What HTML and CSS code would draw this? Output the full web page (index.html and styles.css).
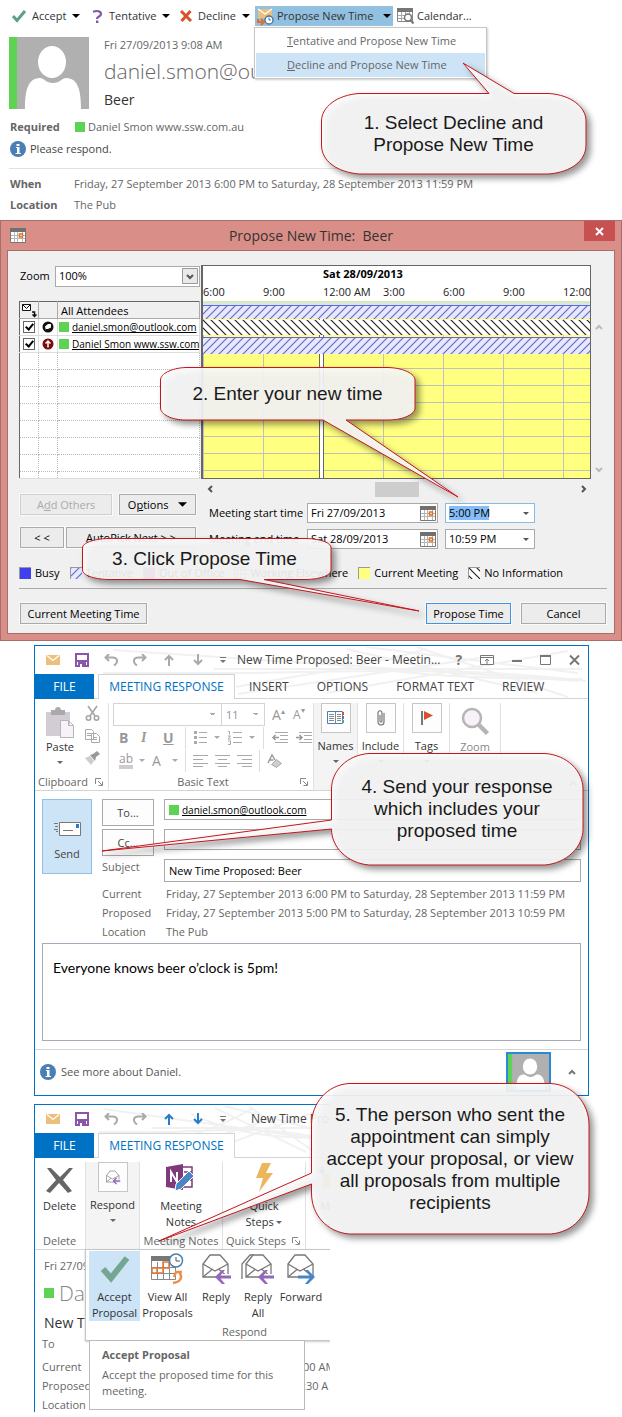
FILE: index.html
```html
<!DOCTYPE html>
<html lang="en">
<head>
<meta charset="utf-8">
<meta name="viewport" content="width=device-width, initial-scale=1">
<title>Propose New Time</title>
<link rel="stylesheet" href="styles.css">
</head>
<body>
<svg class="defs" aria-hidden="true">
  <symbol id="avatar" viewBox="0 0 80 72"><path fill="#b0b0b0" d="M0 0h80v72H0z"/><path fill="#5ed353" d="M0 0h8v72H0z"/><ellipse cx="43" cy="25" rx="14" ry="16" fill="#fff"/><path fill="#fff" d="M16 72c0-16 2-31 15-31 4 0 6 5 13 5s9-5 13-5c13 0 15 15 15 31z"/></symbol>
  <symbol id="info" viewBox="0 0 16 16"><circle cx="8" cy="8" r="8" fill="#4a7fb5"/><path fill="#fff" d="M6.500 3h3v2h-3zM6 6h3.500v6H11v1H5.500v-1H7V7H6z"/></symbol>
  <symbol id="cal" viewBox="0 0 16 15"><path fill="#fff" stroke="#777" d="M.5.5h15v14H.5z"/><path fill="#707070" d="M0 0h16v4H0z"/><path stroke="#b5b5b5" d="M1 7.500h14M1 10.500h14M4.500 4v10M7.500 4v10M12.500 4v10"/><path fill="#fff" stroke="#e07020" stroke-width="1.500" d="M9.500 6h3v3h-3z"/></symbol>
  <symbol id="mail" viewBox="0 0 14 10"><path fill="#ecc07c" d="M0 0h14v10H0z"/><path fill="none" stroke="#fff" stroke-width="1.300" d="M1 .5l6 5 6-5"/></symbol>
  <symbol id="save" viewBox="0 0 14 14"><path fill="#fff" stroke="#8a57a8" stroke-width="2" d="M1 1h12v12H1z"/><path fill="#8a57a8" d="M1 7h12v2H1zM3 9h8v5H3z"/><path fill="#fff" d="M5 11h2v3H5z"/></symbol>
  <symbol id="undo" viewBox="0 0 14 12"><path fill="none" stroke="#aaa" stroke-width="2" d="M5 0L1.500 3.500 5 7M2 3.500h6.500c5.500 0 6 5 1.500 8"/></symbol>
  <symbol id="up" viewBox="0 0 10 12"><path fill="none" stroke="currentColor" stroke-width="2" d="M5 12V1.500M1 6l4-4 4 4"/></symbol>
  <symbol id="down" viewBox="0 0 10 12"><path fill="none" stroke="currentColor" stroke-width="2" d="M5 0v10.500M1 6l4 4 4-4"/></symbol>
  <symbol id="qat" viewBox="0 0 6 6"><path fill="#777" d="M0 0h6v1H0zM0 3h6L3 6z"/></symbol>
  <symbol id="tri" viewBox="0 0 8 4"><path fill="currentColor" d="M0 0h8L4 4z"/></symbol>
  <symbol id="launch" viewBox="0 0 8 8"><path fill="none" stroke="currentColor" d="M.5 6V.5H6M3 3l4 4M7.500 3.500v4h-4"/></symbol>
  <symbol id="env" viewBox="0 0 30 30"><path fill="#fff" stroke="#777" stroke-width="1.300" d="M2 11L9 2h10l8 9v13H2z"/><path fill="none" stroke="#777" stroke-width="1.300" d="M2 11l12 7 13-7M2 24l9-7.500M27 24l-9-7.500"/></symbol>
  <symbol id="larrow" viewBox="0 0 16 14"><path fill="none" stroke="#fff" stroke-width="6" d="M15 7H3"/><path fill="#9467b8" d="M0 7l7-7h3L5.500 5.500H16v3H5.500L10 14H7z"/></symbol>
  <symbol id="swirls" viewBox="0 0 490 52" preserveAspectRatio="none"><g fill="none" stroke="#f1f1f1" stroke-width="2"><path d="M18 3L480 34M8 26h150c110-2 220-6 330 8M118 22h366M140 40C200 28 260 22 330 2M142 47l240-36M270 0l210 26M320 0l150 50M230 46l240-42M250 2l190 44M200 8c90 20 170 24 285 24"/></g></symbol>
</svg>

<main class="page">
  <section class="invite">
    <div class="actions">
      <button class="act"><svg width="14" height="12" viewBox="0 0 14 12"><path fill="none" stroke="#5e9f86" stroke-width="3" d="M1 6l4 4.500L13 1"/></svg>Accept<svg class="tri" width="8" height="4"><use href="#tri"/></svg></button>
      <button class="act"><svg width="11" height="13" viewBox="0 0 11 13"><path fill="none" stroke="#8257a8" stroke-width="2.200" d="M1 1.800C5 .3 9 1 9 4S5 6 5 9"/><path fill="#8257a8" d="M4 10.500h2.400V13H4z"/></svg>Tentative<svg class="tri" width="8" height="4"><use href="#tri"/></svg></button>
      <button class="act"><svg width="12" height="12" viewBox="0 0 12 12"><path fill="none" stroke="#d9512c" stroke-width="3" d="M1 1l10 10M10.500 1L1.500 11"/></svg>Decline<svg class="tri" width="8" height="4"><use href="#tri"/></svg></button>
      <button class="act act-on"><svg width="17" height="17" viewBox="0 0 17 17"><path fill="#ecc07c" d="M1 1h14v9H1z"/><path fill="none" stroke="#fff" stroke-width="1.200" d="M1 1l7 5 7-5"/><path fill="none" stroke="#e07020" stroke-width="2" d="M1 11v3h4M4 11l3 3-3 3"/><circle cx="12" cy="12" r="4" fill="#fff" stroke="#3f6f9f" stroke-width="1.300"/><path fill="none" stroke="#3f6f9f" d="M12 9.500V12h2"/></svg>Propose New Time<svg class="tri" width="8" height="4"><use href="#tri"/></svg></button>
      <button class="act near"><svg width="17" height="16" viewBox="0 0 17 16"><path fill="#fff" stroke="#888" d="M.5.5h15v13H.5z"/><path fill="#777" d="M0 0h16v4H0z"/><path stroke="#aaa" d="M1 7.500h14M1 10.500h14M4.500 4v9M8.500 4v9M12.500 4v9"/><circle cx="11" cy="9.500" r="3.500" fill="#fff" stroke="#777" stroke-width="1.500"/><path stroke="#777" stroke-width="2" d="M13.500 12l3 3.500"/></svg>Calendar...</button>
    </div>
    <div class="menu">
      <button class="menu-item"><u>T</u>entative and Propose New Time</button>
      <button class="menu-item menu-on"><u>D</u>ecline and Propose New Time</button>
    </div>
    <header class="sender">
      <svg width="80" height="72"><use href="#avatar"/></svg>
      <div>
        <p>Fri 27/09/2013 9:08 AM</p>
        <p class="from">daniel.smon@outlook.com</p>
        <h1 class="subject">Beer</h1>
      </div>
    </header>
    <dl class="facts facts-req"><dt>Required</dt><dd><i class="sq"></i>Daniel Smon www.ssw.com.au</dd></dl>
    <p class="notice"><svg width="16" height="16"><use href="#info"/></svg>Please respond.</p>
    <hr class="rule">
    <dl class="facts"><dt>When</dt><dd>Friday, 27 September 2013 6:00 PM to Saturday, 28 September 2013 11:59 PM</dd><dt>Location</dt><dd>The Pub</dd></dl>
  </section>

  <section class="dialog">
    <header class="dialog-bar">
      <svg width="16" height="15"><use href="#cal"/></svg>
      <h2>Propose New Time:&nbsp; Beer</h2>
      <button class="close" aria-label="Close"><svg width="9" height="9" viewBox="0 0 9 9"><path stroke="#fff" stroke-width="2" d="M1 1l7 7M8 1L1 8"/></svg></button>
    </header>
    <div class="dialog-body">
      <div class="planner">
        <div class="people">
          <div class="zoom"><label for="zoom">Zoom</label><span class="zoom-box"><select id="zoom"><option>100%</option></select><svg width="16" height="16" viewBox="0 0 16 16"><path fill="#e9e9e9" stroke="#999" d="M.5.5h15v15H.5z"/><path fill="none" stroke="#555" stroke-width="2" d="M5 7l3 3 3-3"/></svg></span></div>
          <table class="attendees">
            <tr><th><svg width="15" height="15" viewBox="0 0 15 15"><path fill="#fff" stroke="#111" d="M.5 1.500h8v6h-8zM.5 1.500l4 4 4-4"/><path fill="none" stroke="#111" stroke-width="1.500" d="M10 9h2.500v4M10.500 11.500l2 2 2-2"/></svg></th><th></th><th>All Attendees</th></tr>
            <tr><td><input type="checkbox" checked aria-label="Include daniel.smon@outlook.com"></td><td><svg width="12" height="12" viewBox="0 0 12 12"><circle cx="6" cy="6" r="5.500" fill="#111"/><path fill="#fff" d="M3 5.500L6 3h3v3.500L6 8H4v1.500z"/></svg></td><td><div class="who"><i class="sq"></i><u>daniel.smon@outlook.com</u></div></td></tr>
            <tr><td><input type="checkbox" checked aria-label="Include Daniel Smon"></td><td><svg width="12" height="12" viewBox="0 0 12 12"><circle cx="6" cy="6" r="5.500" fill="#7b0a0a"/><path fill="none" stroke="#fff" stroke-width="1.500" d="M6 9.500V3M3.500 5.500L6 3l2.500 2.500"/></svg></td><td><div class="who"><i class="sq"></i><u>Daniel Smon www.ssw.com</u></div></td></tr>
            <tr class="blank"><td></td><td></td><td></td></tr><tr class="blank"><td></td><td></td><td></td></tr><tr class="blank"><td></td><td></td><td></td></tr><tr class="blank"><td></td><td></td><td></td></tr><tr class="blank"><td></td><td></td><td></td></tr><tr class="blank"><td></td><td></td><td></td></tr><tr class="blank"><td></td><td></td><td></td></tr><tr class="tail"><td></td><td></td><td></td></tr>
          </table>
        </div>
        <div class="timeline">
          <div class="days"><b>Sat 28/09/2013</b></div>
          <div class="hours"><span>6:00</span><span>9:00</span><span>12:00 AM</span><span>3:00</span><span>6:00</span><span>9:00</span><span>12:00</span></div>
          <div class="slots">
            <svg class="bar bar-all" width="100%" height="13"><defs><pattern id="tent" width="8" height="8" patternUnits="userSpaceOnUse"><path fill="#e6e9ff" d="M0 0h8v8H0z"/><path stroke="#6868cc" stroke-width="1.200" d="M-1 9L9-1M-1 1l2-2M7 9l2-2"/></pattern><pattern id="noinfo" width="8" height="8" patternUnits="userSpaceOnUse"><path fill="#fff" d="M0 0h8v8H0z"/><path stroke="#222" stroke-width="1.200" d="M-1-1L9 9M7-1l2 2M-1 7l2 2"/></pattern></defs><rect width="100%" height="13" fill="url(#tent)"/></svg>
            <svg class="bar-none" width="100%" height="15"><rect width="100%" height="15" fill="url(#noinfo)"/></svg>
            <svg class="bar" width="100%" height="16"><rect width="100%" height="16" fill="url(#tent)"/></svg>
          </div>
        </div>
        <div class="vscroll"><svg width="8" height="6" viewBox="0 0 8 6"><path fill="none" stroke="#bbb" stroke-width="2" d="M1 5l3-3 3 3"/></svg><svg width="8" height="6" viewBox="0 0 8 6"><path fill="none" stroke="#bbb" stroke-width="2" d="M1 1l3 3 3-3"/></svg></div>
      </div>
      <div class="controls">
        <div class="pick">
          <button class="btn off" disabled><span>A<u>d</u>d Others</span></button><button class="btn"><span>O<u>p</u>tions</span><svg width="9" height="5"><use href="#tri"/></svg></button>
          <button class="btn">&lt; &lt;</button><button class="btn">AutoPick Next &gt; &gt;</button>
        </div>
        <div>
          <div class="hscroll"><svg width="6" height="8" viewBox="0 0 6 8"><path fill="none" stroke="#555" stroke-width="2" d="M5 1L2 4l3 3"/></svg><i></i><svg width="6" height="8" viewBox="0 0 6 8"><path fill="none" stroke="#555" stroke-width="2" d="M1 1l3 3-3 3"/></svg></div>
          <div class="times">
            <label for="sd">Meeting start time</label><span class="date"><input id="sd" value="Fri 27/09/2013"><svg width="16" height="15"><use href="#cal"/></svg></span><span class="time time-on"><select aria-label="Start time"><option>5:00 PM</option></select><svg width="6" height="3"><use href="#tri"/></svg></span>
            <label for="ed">Meeting end time</label><span class="date"><input id="ed" value="Sat 28/09/2013"><svg width="16" height="15"><use href="#cal"/></svg></span><span class="time"><select aria-label="End time"><option>10:59 PM</option></select><svg width="6" height="3"><use href="#tri"/></svg></span>
          </div>
        </div>
      </div>
      <ul class="legend">
        <li><i class="key busy"></i>Busy</li>
        <li><svg class="key" width="12" height="12"><rect width="12" height="12" fill="url(#tent)"/></svg>Tentative</li>
        <li><i class="key oof"></i>Out of Office</li>
        <li><i class="key else"></i>Working Elsewhere</li>
        <li><i class="key now"></i>Current Meeting</li>
        <li><svg class="key" width="12" height="12"><rect width="12" height="12" fill="url(#noinfo)"/></svg>No Information</li>
      </ul>
      <div class="submit"><button class="btn cur">Current Meeting Time</button><button class="btn primary">Propose Time</button><button class="btn">Cancel</button></div>
    </div>
  </section>

  <section class="window compose">
    <svg class="swirls"><use href="#swirls"/></svg>
    <header class="bar-top">
      <svg width="14" height="10"><use href="#mail"/></svg><svg width="14" height="14"><use href="#save"/></svg><svg width="14" height="12"><use href="#undo"/></svg><svg class="flip" width="14" height="12"><use href="#undo"/></svg><svg width="10" height="12"><use href="#up"/></svg><svg width="10" height="12"><use href="#down"/></svg><svg width="6" height="6"><use href="#qat"/></svg>
      <h2>New Time Proposed: Beer - Meetin...</h2>
      <div class="sys"><b>?</b><svg width="14" height="10" viewBox="0 0 14 10"><path fill="#fff" stroke="#777" d="M.5.5h13v9H.5zM.5 2.500h13"/><path fill="none" stroke="#777" d="M7 9V4M5 6l2-2 2 2"/></svg><svg width="10" height="10" viewBox="0 0 10 10"><path fill="#777" d="M0 5h10v2H0z"/></svg><svg width="11" height="10" viewBox="0 0 11 10"><path fill="none" stroke="#777" d="M.5.5h10v9H.5z"/><path fill="#777" d="M0 0h11v2H0z"/></svg><svg width="11" height="10" viewBox="0 0 11 10"><path stroke="#777" stroke-width="2" d="M1 .5l9 9M10 .5l-9 9"/></svg></div>
    </header>
    <nav class="tabs"><a class="file" href="#file">FILE</a><a class="on" href="#response">MEETING RESPONSE</a><a href="#insert">INSERT</a><a href="#options">OPTIONS</a><a href="#format">FORMAT TEXT</a><a href="#review">REVIEW</a></nav>
    <div class="ribbon">
      <div class="group clip">
        <button class="big"><svg width="30" height="32" viewBox="0 0 30 32"><path fill="#d2cdd4" d="M1 5h24v24H1z"/><path fill="#aaa" d="M6 3h4c0-4 6-4 6 0h4v5H6z"/><path fill="#f7f2f8" stroke="#b5b5b5" d="M15.500 13.500h8l5 5v12h-13zM23.500 13.500v5h5"/></svg>Paste<svg class="tri sm" width="6" height="3"><use href="#tri"/></svg></button>
        <div class="stack"><svg width="15" height="15" viewBox="0 0 15 15"><g fill="none" stroke="#a5a5a5" stroke-width="1.600"><path d="M3 0l7 10M12 0L5 10"/><circle cx="3.500" cy="12" r="2.200"/><circle cx="11.500" cy="12" r="2.200"/></g></svg><svg width="15" height="14" viewBox="0 0 15 14"><path fill="#fff" stroke="#aaa" d="M.5.5h6l2 2v8h-8zM6.500 4.500h5l3 3v6h-8zM2 4.500h4M2 6.500h4M8 8.500h4M8 10.500h4"/></svg><svg width="15" height="14" viewBox="0 0 15 14"><path fill="#d0cbd2" d="M0 7l5-2 4 5-3 4z"/><path fill="#999" d="M5 4l3-1 4-3 3 3-4 3-1 4z"/></svg></div>
        <span class="cap">Clipboard</span><svg class="corner" width="8" height="8"><use href="#launch"/></svg>
      </div>
      <div class="group text">
        <div class="tools"><select class="font" aria-label="Font"><option></option></select><select class="size" aria-label="Font size"><option>11</option></select><span class="g">A<sup>▴</sup></span><span class="g small">A<sup>▾</sup></span></div>
        <div class="tools"><b class="g">B</b><i class="g it">I</i><b class="g"><u>U</u></b><span class="vr"></span><svg width="13" height="15" viewBox="0 0 13 15"><path fill="#aaa" d="M0 1h3v3H0zM0 6h3v3H0zM0 11h3v3H0zM5 2h8v1H5zM5 7h8v1H5zM5 12h8v1H5z"/></svg><svg class="tri sm" width="6" height="3"><use href="#tri"/></svg><svg width="14" height="15" viewBox="0 0 14 15"><path fill="none" stroke="#aaa" d="M0 1.500h1.500v3M0 6h2.500L0 9h3M0 11h2.500v3.500H0M5 2.500h9M5 7.500h9M5 12.500h9"/></svg><svg class="tri sm" width="6" height="3"><use href="#tri"/></svg><span class="vr"></span><svg width="16" height="11" viewBox="0 0 16 11"><path fill="none" stroke="#aaa" d="M3 .5h13M8 3.500h8M8 7.500h8M3 10.500h13"/><path fill="none" stroke="#999" stroke-width="1.500" d="M7 5.500H1M3.500 3L1 5.500 3.500 8"/></svg><svg width="16" height="11" viewBox="0 0 16 11"><path fill="none" stroke="#aaa" d="M3 .5h13M8 3.500h8M8 7.500h8M3 10.500h13"/><path fill="none" stroke="#999" stroke-width="1.500" d="M0 5.500h6M3.500 3L6 5.500 3.500 8"/></svg></div>
        <div class="tools row3"><span class="g hl">ab</span><svg class="tri sm" width="6" height="3"><use href="#tri"/></svg><span class="g">A</span><svg class="tri sm" width="6" height="3"><use href="#tri"/></svg><span class="vr"></span><svg width="15" height="12" viewBox="0 0 15 12"><path stroke="#aaa" d="M0 .5h15M0 4.500h10M0 8.500h15M0 11.500h10"/></svg><svg width="15" height="12" viewBox="0 0 15 12"><path stroke="#aaa" d="M0 .5h15M3 4.500h9M0 8.500h15M3 11.500h9"/></svg><svg width="15" height="12" viewBox="0 0 15 12"><path stroke="#aaa" d="M0 .5h15M5 4.500h10M0 8.500h15M5 11.500h10"/></svg><span class="vr"></span><svg width="15" height="14" viewBox="0 0 15 14"><path fill="none" stroke="#999" stroke-width="1.400" d="M1 9l4-8 3 5M2.500 6h4"/><path fill="#d0cbd2" stroke="#aaa" d="M4.500 10.500l5-5 5 4-5 4z"/></svg></div>
        <span class="cap mid">Basic Text</span><svg class="corner" width="8" height="8"><use href="#launch"/></svg>
      </div>
      <div class="group tile shade"><button class="big"><span class="ico"><svg width="18" height="14" viewBox="0 0 18 14"><path fill="#fff" stroke="#4a7fb5" d="M.5.5h15v12H.5z"/><path stroke="#888" d="M8.500 1v12M2 3.500h5M2 5.500h5M2 7.500h5M2 9.500h5M10 3.500h4M10 5.500h4M10 7.500h4M10 9.500h4"/><path fill="#d9512c" d="M15 1h2v3h-2z"/><path fill="#4a7fb5" d="M15 5h2v3h-2z"/><path fill="#5e9f86" d="M15 9h2v3h-2z"/></svg></span>Names<svg class="tri sm" width="6" height="3"><use href="#tri"/></svg></button></div>
      <div class="group tile"><button class="big"><span class="ico"><svg width="10" height="16" viewBox="0 0 10 16"><path fill="none" stroke="#777" stroke-width="1.200" d="M8 3v9c0 4-6 4-6 0V3c0-3 4-3 4 0v8c0 1.500-2 1.500-2 0V5"/></svg></span>Include<svg class="tri sm" width="6" height="3"><use href="#tri"/></svg></button></div>
      <div class="group tile"><button class="big"><span class="ico"><svg width="12" height="14" viewBox="0 0 12 14"><path fill="#777" d="M0 0h2v14H0z"/><path fill="#d9512c" d="M3 0l9 4.500L3 9z"/></svg></span>Tags<svg class="tri sm" width="6" height="3"><use href="#tri"/></svg></button></div>
      <div class="group tile zoomg"><button class="big"><svg width="28" height="28" viewBox="0 0 28 28"><circle cx="11" cy="11" r="9" fill="#f7f2f8" stroke="#b5b5b5" stroke-width="2.500"/><path stroke="#b5b5b5" stroke-width="4.500" d="M17.500 17.500l9 9"/></svg>Zoom</button><span class="cap mid">Zoom</span></div>
      <svg class="fold" width="8" height="6" viewBox="0 0 8 6"><path fill="none" stroke="#777" stroke-width="2" d="M1 5l3-3 3 3"/></svg>
    </div>
    <div class="form">
      <button class="send"><svg width="28" height="16" viewBox="0 0 28 16"><path fill="#fff" stroke="#777" d="M6.500 1.500h21v13h-21z"/><path fill="#2b7cc4" d="M23 3h3v4h-3z"/><path stroke="#777" d="M10 9.500h10M1 2.500h4M2 5.500h3M1 8.500h4M3 10.500h2"/></svg>Send</button>
      <div class="fields">
        <button class="pickto">To...</button><div class="fld tall"><i class="sq"></i><u>daniel.smon@outlook.com</u></div>
        <button class="pickto">Cc...</button><input class="fld tall" aria-label="Cc">
        <label for="subj">Subject</label><input class="fld" id="subj" value="New Time Proposed: Beer">
      </div>
    </div>
    <dl class="facts facts-in"><dt>Current</dt><dd>Friday, 27 September 2013 6:00 PM to Saturday, 28 September 2013 11:59 PM</dd><dt>Proposed</dt><dd>Friday, 27 September 2013 5:00 PM to Saturday, 28 September 2013 10:59 PM</dd><dt>Location</dt><dd>The Pub</dd></dl>
    <textarea class="message" aria-label="Message">Everyone knows beer o’clock is 5pm!</textarea>
    <footer class="people-pane"><svg width="16" height="16"><use href="#info"/></svg><span>See more about Daniel.</span><svg class="face" width="45" height="40" viewBox="0 0 80 72" preserveAspectRatio="none"><use href="#avatar" width="80" height="72"/></svg><svg width="8" height="6" viewBox="0 0 8 6"><path fill="none" stroke="#777" stroke-width="2" d="M1 5l3-3 3 3"/></svg></footer>
  </section>

  <section class="window reply">
    <svg class="swirls"><use href="#swirls"/></svg>
    <header class="bar-top blue">
      <svg width="14" height="10"><use href="#mail"/></svg><svg width="14" height="14"><use href="#save"/></svg><svg width="14" height="12"><use href="#undo"/></svg><svg class="flip" width="14" height="12"><use href="#undo"/></svg><svg width="10" height="12"><use href="#up"/></svg><svg width="10" height="12"><use href="#down"/></svg><svg width="6" height="6"><use href="#qat"/></svg>
      <h2 class="indent">New Time Prop</h2>
    </header>
    <nav class="tabs"><a class="file" href="#file">FILE</a><a class="on" href="#response">MEETING RESPONSE</a></nav>
    <div class="ribbon">
      <div class="group del"><button class="big"><svg width="30" height="28" viewBox="0 0 30 28"><path fill="#666" d="M2 2l4 0 9 9 9-9h4L18 14l9 11-4 2-9-10-9 10-4-2 10-11z"/></svg>Delete</button><span class="cap">Delete</span></div>
      <div class="group resp shade"><button class="big"><span class="ico"><svg width="16" height="15" viewBox="0 0 30 30"><use href="#env" width="30" height="30"/><use href="#larrow" x="14" y="15" width="16" height="14"/></svg></span>Respond<svg class="tri sm" width="6" height="3"><use href="#tri"/></svg></button></div>
      <div class="group notes"><button class="big"><svg width="30" height="30" viewBox="0 0 30 28"><path fill="#fff" stroke="#80397b" stroke-width="1.500" d="M14 3h12v20H14z"/><path stroke="#80397b" stroke-width="1.500" d="M18 8h8M18 12h8M18 16h8"/><path fill="#80397b" d="M0 3l17-3v26L0 23z"/><path fill="none" stroke="#fff" stroke-width="2" d="M5 18V8l6 10V8"/><path fill="#4a86c5" stroke="#fff" d="M10 20L23 7l5 5-13 13-6 2z"/></svg><span>Meeting<br>Notes</span></button><span class="cap mid">Meeting Notes</span></div>
      <div class="group quick"><button class="big"><svg width="18" height="30" viewBox="0 0 18 30"><path fill="#ecb65c" d="M7 0h9l-5 10h7L4 29l4-14H1z"/></svg><span>Quick<br>Steps <svg class="tri sm" width="6" height="3"><use href="#tri"/></svg></span></button><span class="cap">Quick Steps</span><svg class="corner" width="8" height="8"><use href="#launch"/></svg></div>
      <div class="group move"><button class="big"><svg width="20" height="28" viewBox="0 0 20 28"><path fill="#ecb65c" d="M4 8h16v14H4z"/><path fill="none" stroke="#4a7fb5" stroke-width="2" d="M3 0v7M0 4l3 3 3-3"/></svg>Mo<svg class="tri sm" width="6" height="3"><use href="#tri"/></svg></button></div>
    </div>
    <div class="read">
      <p>Fri 27/09</p>
      <p class="from"><i class="sq"></i>Dan</p>
      <h3 class="subject">New T</h3>
      <dl class="facts facts-read"><dt>To</dt><dd></dd><dt>Current</dt><dd>00 AM</dd><dt>Proposed</dt><dd>:30 A</dd><dt>Location</dt><dd></dd></dl>
    </div>
    <div class="drop">
      <button class="cmd cmd-on"><svg width="30" height="30" viewBox="0 0 30 30"><path fill="none" stroke="#74a792" stroke-width="6" d="M3 15l8 9L27 4"/></svg>Accept<br>Proposal</button>
      <button class="cmd"><svg width="34" height="32" viewBox="0 0 34 32"><path fill="#fff" stroke="#888" d="M.5 3.500h24v23H.5zM.5 14.500h24M.5 20.500h24M6.500 9v18M12.500 9v18M18.500 9v18"/><path fill="#777" d="M0 3h25v5H0z"/><path fill="none" stroke="#e07a35" stroke-width="1.500" d="M12 9h6v6h-6zM1 15h5v5H1zM6 15h6v5H6z"/><circle cx="25" cy="7.500" r="6.500" fill="#fff" stroke="#4a7fb5" stroke-width="1.500"/><path fill="none" stroke="#555" d="M25 4v4h4"/><path fill="none" stroke="#ec8f4a" stroke-width="2.500" d="M22 30c8-1 10-6 6-11M23 24l2-5h6"/></svg>View All<br>Proposals</button>
      <button class="cmd"><svg width="30" height="32" viewBox="0 0 30 32"><use href="#env" width="30" height="30"/><use href="#larrow" x="14" y="17" width="16" height="14"/></svg>Reply</button>
      <button class="cmd"><svg width="34" height="32" viewBox="0 0 34 32"><path fill="none" stroke="#777" stroke-width="1.300" d="M1 26V11l8-9h4"/><use href="#env" x="3" width="30" height="30"/><use href="#larrow" x="17" y="17" width="16" height="14"/></svg>Reply<br>All</button>
      <button class="cmd"><svg width="30" height="32" viewBox="0 0 30 32"><use href="#env" width="30" height="30"/><path stroke="#fff" stroke-width="6" d="M13 24h12"/><path fill="#4a86c5" d="M29 24l-7-7h-3l4.500 5.500H12v3h11.500L19 31h3z"/></svg>Forward</button>
      <span class="drop-cap">Respond</span>
    </div>
    <div class="tip" role="tooltip"><b>Accept Proposal</b><p>Accept the proposed time for this meeting.</p></div>
  </section>

  <aside class="note n1"><svg><path d="M38 .5H168L142-30 193 .5H228C250 2 265 14 265 28V52C265 68 250 79 228 81H38C16 79 .5 68 .5 52V28C.5 14 16 2 38 .5z"/></svg><p>1. Select Decline and Propose New Time</p></aside>
  <aside class="note n2"><svg><path d="M26 .5H228C244 1 255 7 255 13V41C255 47 244 53 228 53H186L298 130 163 53H26C11 53 .5 47 .5 41V13C.5 7 11 1 26 .5z"/></svg><p>2. Enter your new time</p></aside>
  <aside class="note n3"><svg><path d="M26 .5H224C240 1 249 5 249 10V32C249 37 240 41 224 41.500H182L337 73 158 41.500H26C11 41 .5 37 .5 32V10C.5 5 11 1 26 .5z"/></svg><p>3. Click Propose Time</p></aside>
  <aside class="note n4"><svg><path d="M38 .5H214C236 2 252 18 252 36V76C252 94 236 110 214 112H38C16 110 .5 94 .5 76L-229 98 .5 67V36C.5 18 16 2 38 .5z"/></svg><p>4. Send your response which includes your proposed time</p></aside>
  <aside class="note n5"><svg><path d="M38 .5H240C262 2 278 20 278 42V110C278 132 262 149 240 151H38C16 149 .5 132 .5 110V101L-152 158 .5 90V42C.5 20 16 2 38 .5z"/></svg><p>5. The person who sent the appointment can simply accept your proposal, or view all proposals from multiple recipients</p></aside>
</main>
</body>
</html>
```
FILE: styles.css
```css
* { box-sizing: border-box; margin: 0; padding: 0; }
body { background: #fff; color: #666; font: 11px/16px "Open Sans", "Noto Sans", sans-serif; }
button, input, select, textarea { font: inherit; color: inherit; background: none; border: 0; border-radius: 0; appearance: none; outline: 0; }
button, a, h2, label, dd, dt, p, u { white-space: nowrap; }
a { color: inherit; text-decoration: none; }
svg { flex: none; display: block; overflow: visible; }
.defs { position: absolute; width: 0; height: 0; }
.page { position: relative; padding-bottom: 5px; overflow: hidden; }
.sq { display: inline-block; width: 10px; height: 10px; background: #5ed353; flex: none; }
.tri { color: #000; }
.tri.sm { color: #666; }

/* invitation */
.invite { position: relative; height: 220px; }
.actions { display: grid; grid-template-columns: 80px 88px 75px 142px auto; justify-content: start; padding: 6px 0 0 12px; color: #333; }
.act { display: flex; align-items: center; gap: 6px; height: 20px; }
.act-on { background: #92c0e0; padding: 0 2px; margin-right: 4px; gap: 3px; }
.act-on .tri { margin-left: auto; }
.near { gap: 3px; }
.menu { position: absolute; z-index: 2; left: 254px; top: 27px; width: 233px; padding: 1px; background: #fff; border: 1px solid #c6c6c6; box-shadow: 1px 1px 2px #ccc; }
.menu-item { display: block; width: 100%; height: 24px; padding-left: 31px; text-align: left; }
.menu-on { background: #cde4f7; }
.sender { display: flex; gap: 15px; height: 90px; padding: 11px 0 0 9px; }
.from { font-size: 21px; line-height: 36px; font-weight: 300; }
.subject { font-size: 14px; line-height: 22px; font-weight: 500; color: #333; }
.facts { display: grid; grid-template-columns: 64px 1fr; line-height: 21px; padding-left: 10px; }
.facts dt { font-weight: 700; }
.facts dd { display: flex; align-items: center; gap: 3px; }
.facts-req { grid-template-columns: 65px 1fr; }
.notice { display: flex; align-items: center; gap: 4px; padding: 4px 0 0 10px; color: #444; }
.rule { border: 0; height: 1px; background: #e1e1e1; margin: 11px 125px 4px 9px; }

/* dialog */
.dialog { background: #da8e88; border: 1px solid #a86e6c; padding: 0 6px 6px; color: #000; }
.dialog-bar { display: flex; align-items: center; justify-content: space-between; height: 29px; padding-left: 3px; }
.dialog-bar h2 { font-size: 14px; font-weight: 400; color: #333; margin-left: 12px; }
.close { align-self: flex-start; display: grid; place-items: center; width: 31px; height: 20px; background: #c75050; }
.dialog-body { background: #f0f0f0; border: 1px solid #a86e6c; padding: 14px 7px 9px 11px; }
.planner { display: grid; grid-template-columns: 182px 1fr 16px; }
.zoom { display: flex; justify-content: space-between; align-items: center; height: 36px; padding: 0 1px 14px 1px; }
.zoom-box { display: flex; align-items: center; width: 145px; height: 21px; border: 1px solid #aaa; background: #fff; padding-right: 1px; }
.zoom-box select { flex: 1; padding-left: 3px; }
.attendees { width: 181px; table-layout: fixed; border-collapse: collapse; background: #fff; border-left: 1px solid #666; border-top: 1px solid #666; border-bottom: 1px solid #666; line-height: 15px; }
.attendees tr { height: 17px; }
.attendees .tail { height: 7px; }
.attendees th { background: #f0f0f0; font-weight: 400; text-align: left; padding-left: 3px; border-right: 1px solid #aaa; border-bottom: 1px solid #aaa; }
.attendees th:first-child, .attendees th:nth-child(2) { width: 19px; padding: 0; }
.attendees th svg { margin: auto; }
.attendees td { height: 17px; border-right: 1px solid #ddd; border-bottom: 1px solid #ddd; }
.attendees td svg { margin: auto; }
.attendees .blank td { border-right: 1px dotted #bbb; border-bottom: 1px dotted #bbb; }
.attendees .tail td { height: 7px; border-right: 1px dotted #bbb; }
.attendees input { display: block; width: 12px; height: 12px; margin: auto; border: 1px solid #666; background: #fff; }
.attendees input::after { content: ""; display: block; width: 3px; height: 6px; margin: 0 0 0 3px; border: solid #000; border-width: 0 2px 2px 0; transform: rotate(40deg); }
.who { display: flex; align-items: center; gap: 3px; padding-left: 1px; font-size: 10px; overflow: hidden; }
.timeline { display: flex; flex-direction: column; background: #fff; border: 1px solid #666; border-left-width: 2px; overflow: hidden; height: 214px; }
.days { line-height: 16px; padding-left: 120px; }
.hours { display: grid; grid-template-columns: repeat(7, 60px); height: 19px; line-height: 20px; color: #222; }
.hours span { white-space: nowrap; }
.slots { position: relative; flex: 1; padding-top: 4px; background: linear-gradient(#dfe8b0 0 2px, #cde9f5 2px 4px, transparent 4px), linear-gradient(90deg, transparent 116px, #666 116px 117px, #fff 117px 120px, #666 120px 121px, transparent 121px), linear-gradient(90deg, transparent 59px, #c0c0c0 59px) 1px 0 / 60px 100%, repeating-linear-gradient(#ffff80 0 16px, #c0c0c0 16px 17px); }
.bar { border: solid #6868cc; border-width: 1px 0; margin-bottom: 2px; }
.bar-none { margin-bottom: 2px; }
.vscroll { display: flex; flex-direction: column; justify-content: space-between; align-items: center; padding: 59px 0 6px; }
.controls { display: grid; grid-template-columns: 183px 1fr; }
.btn { display: flex; align-items: center; justify-content: center; gap: 10px; height: 21px; background: #ececec; border: 1px solid #aaa; outline: 1px solid #fafafa; }
.btn.off { color: #aaa; border-color: #d0d0d0; }
.pick { display: grid; grid-template-columns: repeat(24, 1fr); row-gap: 12px; align-content: start; padding: 15px 6px 0 1px; }
.pick .btn:nth-child(1) { grid-column: 1 / 14; margin-right: 3px; }
.pick .btn:nth-child(2) { grid-column: 14 / 25; margin-left: 4px; }
.pick .btn:nth-child(3) { grid-column: 1 / 7; }
.pick .btn:nth-child(4) { grid-column: 7 / 25; margin-left: 2px; }
.hscroll { display: flex; align-items: center; justify-content: space-between; height: 18px; padding: 2px 20px 0 5px; }
.hscroll i { width: 44px; height: 15px; background: #cdcdcd; }
.times { display: grid; grid-template-columns: 91px 131px 90px; gap: 6px 7px; align-items: center; padding: 6px 0 0 7px; }
.date, .time { display: flex; align-items: center; height: 20px; background: #fff; border: 1px solid #aaa; padding: 0 1px 0 3px; }
.date input { flex: 1; min-width: 0; }
.time { padding-right: 5px; color: #000; }
.time select { flex: 1; }
.time svg { color: #555; }
.time-on { border-color: #8abbe0; }
.time-on select { background: linear-gradient(#84bdf8, #84bdf8) no-repeat 0 50% / 40px 14px; }
.legend { display: flex; justify-content: flex-start; gap: 10px; list-style: none; margin-top: 16px; padding-bottom: 7px; border-bottom: 1px solid #aaa; }
.legend li { display: flex; align-items: center; gap: 4px; white-space: nowrap; }
.key { width: 12px; height: 12px; border-top: 1px solid #999; border-left: 1px solid #999; overflow: hidden; }
.busy { background: #4040f0; }
.oof { background: #a040a0; }
.else { background: radial-gradient(#888 1px, #fff 1px) 0 0 / 4px 4px; }
.now { background: #ffff80; }
.submit { display: grid; grid-template-columns: 127px 1fr 85px 85px; column-gap: 10px; padding: 14px 1px 0 1px; }
.submit .primary { grid-column: 3; border-color: #3f94e8; }

/* mail windows */
.window { position: relative; margin-left: 34px; border: 1px solid #0072c6; background: #fff; }
.swirls { position: absolute; left: 60px; top: 1px; width: calc(100% - 60px); height: 52px; }
.bar-top { position: relative; display: flex; align-items: center; height: 28px; padding-left: 11px; gap: 15px; color: #aaa; }
.bar-top > svg:nth-of-type(5), .bar-top > svg:nth-of-type(6) { margin: 0 2px; }
.bar-top.blue { color: #2b7cc4; }
.bar-top h2 { font-size: 12px; font-weight: 400; color: #444; margin-left: -4px; }
.bar-top .indent { margin-left: 10px; }
.flip { transform: scaleX(-1); }
.sys { display: flex; align-items: center; gap: 18px; margin-left: auto; padding-right: 14px; color: #777; font-size: 14px; }
.tabs { position: relative; display: flex; height: 25px; border-bottom: 1px solid #d4d4d4; color: #444; line-height: 26px; font-size: 12px; }
.tabs a { padding: 0 14px; }
.tabs .file { width: 59px; padding: 0; margin-right: 4px; text-align: center; color: #fff; background: #0072c6; height: 25px; }
.tabs .on { height: 25px; width: 137px; padding: 0; text-align: center; background: #fff; color: #0072c6; border: 1px solid #d4d4d4; border-bottom: 0; line-height: 24px; }
.ribbon { position: relative; display: flex; height: 92px; padding: 4px 0 0; border-bottom: 1px solid #d4d4d4; color: #333; }
.group { position: relative; flex: none; display: grid; grid-template-rows: 1fr 16px; border-right: 1px solid #e1e1e1; }
.shade { background: #f4f4f4; }
.big { display: flex; flex-direction: column; align-items: center; align-self: start; }
.big .sm { margin-top: 6px; }
.big span .sm { display: inline-block; margin: 0 0 2px; }
.ico { display: grid; place-items: center; width: 30px; height: 30px; border: 1px solid #c6c6c6; background: #fdfdfd; margin-bottom: 5px; }
.cap { grid-row: 2; color: #666; align-self: end; white-space: nowrap; padding-left: 3px; }
.mid { text-align: center; padding: 0; }
.corner { position: absolute; right: 5px; bottom: 4px; color: #888; }
.clip { width: 74px; grid-template-columns: 50px 1fr; }
.clip .big { padding-top: 4px; }
.stack { display: flex; flex-direction: column; gap: 8px; padding-top: 3px; }
.text { width: 205px; grid-template-rows: 23px 23px 23px 1fr; padding-left: 4px; color: #aaa; }
.text .cap { grid-row: 4; padding-right: 20px; }
.tools { display: flex; align-items: center; gap: 8px; padding-left: 6px; }
.row3 { gap: 7px; }
.tools:first-child { gap: 0; padding: 0; }
.tools .sm { color: #aaa; margin-left: -1px; }
.g { font-size: 14px; line-height: 18px; min-width: 14px; color: #999; }
.g sup { font-size: 8px; line-height: 8px; vertical-align: 6px; }
.tools:first-child .g { margin-left: 7px; }
.small { font-size: 12px; }
.it { font-family: "Liberation Serif", serif; font-weight: 700; }
.hl { font-size: 12px; border-bottom: 4px solid #d0cbd2; line-height: 12px; }
.vr { width: 1px; height: 22px; background: #ddd; }
.font, .size { height: 23px; border: 1px solid #d4d4d4; padding-left: 4px; background: linear-gradient(to bottom left, #aaa 50%, transparent 50%) no-repeat right 8px center / 3px 3px, linear-gradient(to bottom right, #aaa 50%, transparent 50%) no-repeat right 5px center / 3px 3px; }
.font { width: 109px; }
.size { width: 43px; border-left: 0; color: #9a8a9f; }
.tile { width: 46px; }
.shade.tile { width: 44px; }
.zoomg { width: 51px; }
.tile .big { width: 100%; }
.zoomg .big { padding-top: 4px; gap: 4px; color: #888; }
.fold { position: absolute; right: 11px; bottom: 4px; }
.form { display: grid; grid-template-columns: 50px 1fr; gap: 10px; padding: 8px 7px 0; }
.send { display: flex; flex-direction: column; align-items: center; justify-content: center; gap: 9px; height: 75px; padding-top: 10px; background: #cde4f7; border: 1px solid #92c0e0; color: #444; }
.fields { display: grid; grid-template-columns: 52px 1fr; gap: 3px 10px; align-items: start; }
.pickto { height: 27px; border: 1px solid #aaa; background: #fdfdfd; color: #444; }
.fld { display: flex; align-items: center; gap: 3px; width: 100%; height: 23px; border: 1px solid #aaa; padding: 0 4px; background: #fff; color: #000; }
.fld u { font-size: 10px; }
.tall { height: 21px; }
.facts-in { padding: 2px 0 2px 67px; line-height: 19px; }
.facts-in dt, .facts-read dt { font-weight: 400; }
.message { display: block; width: calc(100% - 14px); height: 98px; margin: 0 7px 8px; padding: 13px 10px; border: 1px solid #a5a9b8; resize: none; color: #000; font: 14px/22px Lato, sans-serif; }
.people-pane { display: flex; align-items: center; height: 46px; padding: 0 12px 2px 5px; gap: 5px; border-top: 1px solid #d4d4d4; }
.people-pane span { flex: 1; color: #555; }
.face { border: 2px solid #2b8ad6; margin-right: 12px; overflow: hidden; }
.compose { margin-top: 4px; margin-right: 33px; }

/* received response */
.reply { width: 296px; height: 308px; margin-top: 8px; overflow: hidden; border-right: 0; border-bottom: 0; }
.del { width: 51px; }
.resp { width: 54px; }
.notes { width: 83px; }
.quick { width: 83px; }
.move { width: 46px; }
.del .big { padding: 4px 0 0 8px; gap: 4px; justify-self: start; }
.del .cap { padding-left: 8px; }
.resp .big, .move .big { width: 100%; }
.move .big { padding-top: 4px; gap: 4px; }
.notes .big, .quick .big { width: 100%; padding-top: 1px; gap: 5px; line-height: 16px; }
.read { padding: 8px 0 0 9px; }
.read .from { display: flex; align-items: center; gap: 5px; line-height: 38px; color: #888; }
.facts-read { grid-template-columns: 261px 1fr; grid-template-rows: 23px; padding: 0; margin-left: -2px; line-height: 19px; }
.drop { position: absolute; left: 50px; top: 144px; width: 270px; height: 92px; display: grid; grid-template-columns: 51px 55px 42px 42px 44px; grid-template-rows: 71px 19px; padding: 1px 3px; background: #fff; border: 1px solid #c6c6c6; box-shadow: 0 1px 2px #ccc; color: #333; }
.cmd { display: flex; flex-direction: column; align-items: center; padding-top: 2px; height: 70px; }
.cmd svg { margin-bottom: 4px; min-height: 32px; }
.cmd-on { background: #cde4f7; }
.drop-cap { grid-column: 1 / -1; justify-self: end; padding-right: 11px; line-height: 20px; color: #666; }
.drop-cap { padding-right: 56px; }
.tip { position: absolute; left: 54px; top: 235px; width: 216px; height: 70px; padding: 6px 12px; background: #fff; border: 1px solid #bbb; line-height: 16px; }
.tip b { display: block; margin-bottom: 4px; }
.tip p { white-space: normal; }

/* speech-bubble notes */
.note { position: absolute; z-index: 5; display: grid; place-items: center; color: #1a1a1a; font: 19px/22px "Liberation Sans", Arial, sans-serif; text-align: center; }
.note svg { position: absolute; inset: 0; width: 100%; height: 100%; filter: drop-shadow(4px 4px 3px rgba(0, 0, 0, .45)); }
.note path { fill: rgba(251, 251, 251, .9); stroke: #c4161c; stroke-width: 1; }
.note p { position: relative; white-space: normal; }
.n1 { left: 321px; top: 93px; width: 265px; height: 81px; padding: 0 40px; }
.n2 { left: 160px; top: 367px; width: 255px; height: 53px; }
.n3 { left: 82px; top: 538px; width: 249px; height: 42px; padding-right: 4px; }
.n4 { left: 331px; top: 753px; width: 252px; height: 112px; padding: 0 24px; }
.n5 { left: 311px; top: 1083px; width: 278px; height: 151px; padding: 0 12px; }
```
